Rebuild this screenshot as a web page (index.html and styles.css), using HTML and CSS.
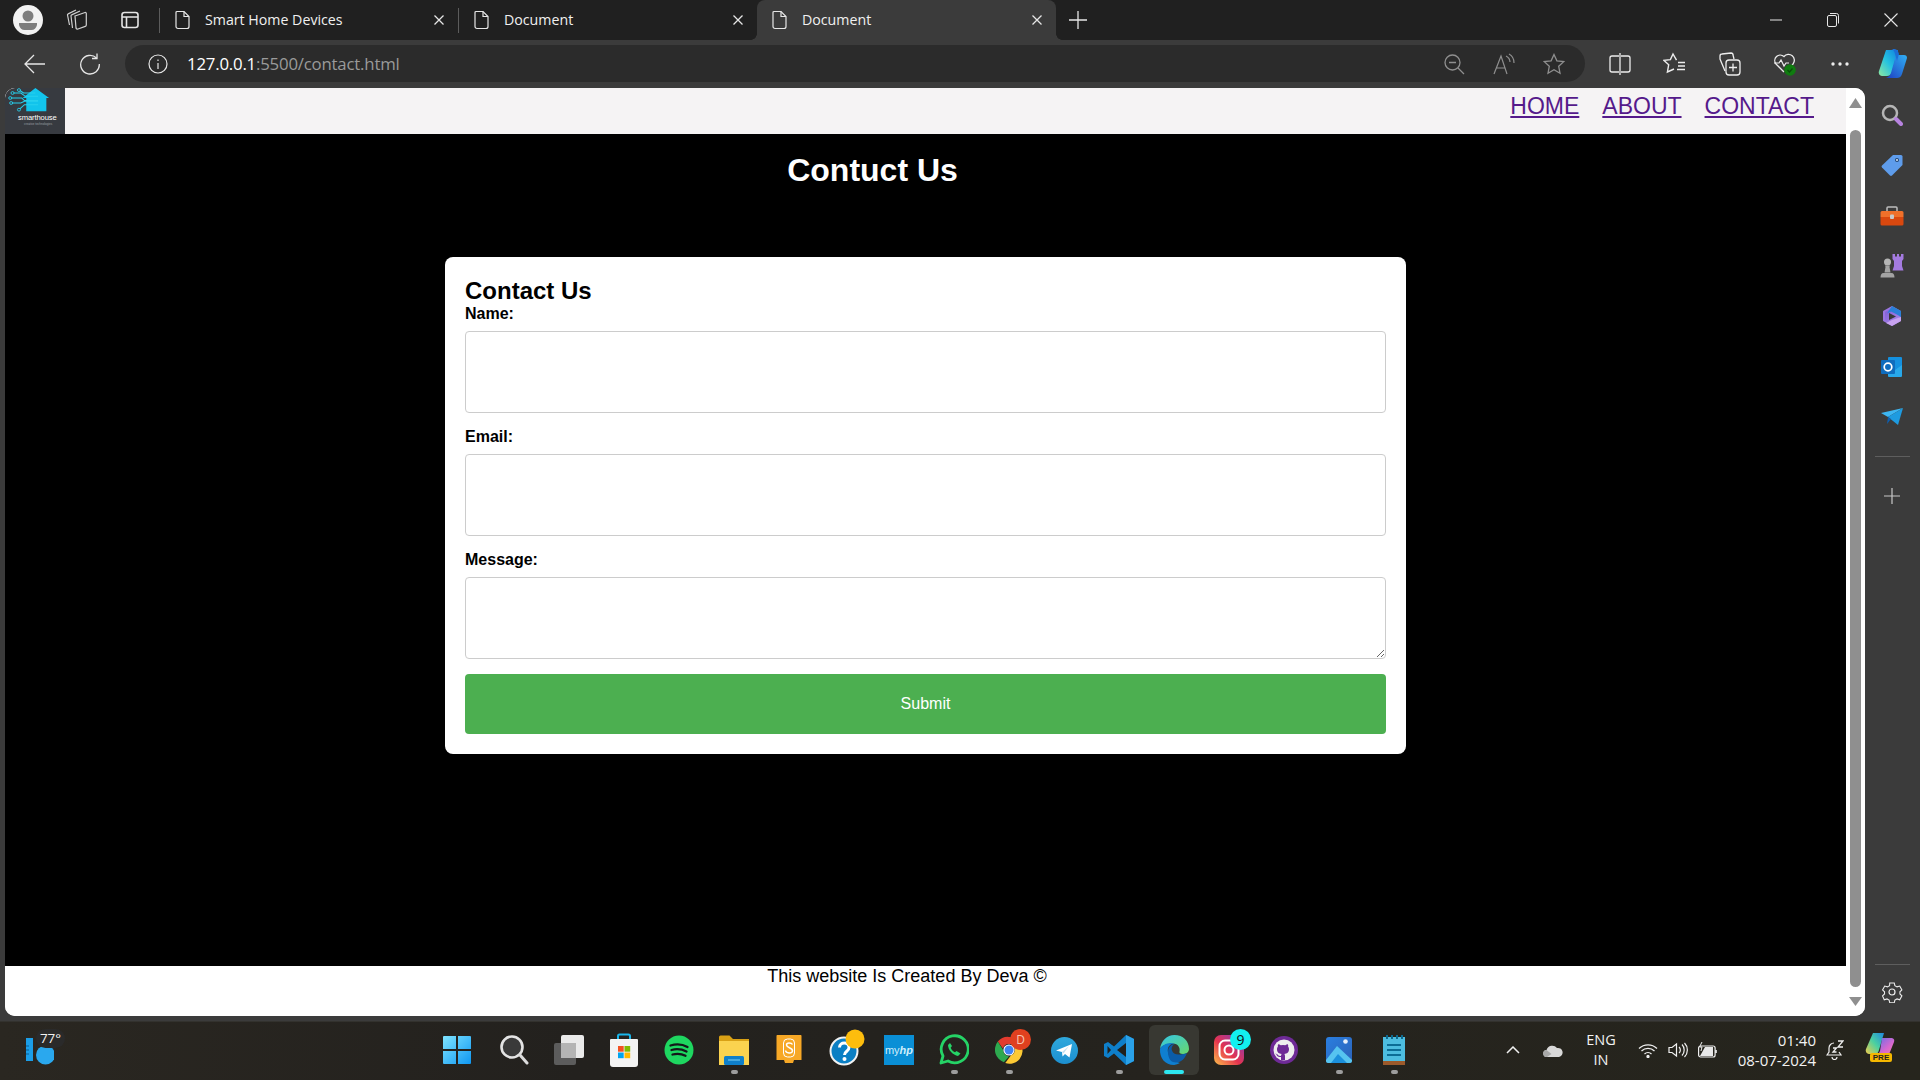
FILE: index.html
```html
<!DOCTYPE html>
<html lang="en">
<head>
<meta charset="utf-8">
<title>Document</title>
<link rel="stylesheet" href="styles.css">
</head>
<body>
<div class="tabstrip">
  <div class="cell profile"><svg width="30" height="30" viewBox="0 0 30 30"><circle cx="15" cy="15" r="15" fill="#f2f2f2"/><circle cx="15" cy="11" r="5.5" fill="#7d7d7d"/><path d="M6 18h18v2a6 7 0 0 1-6 5h-6a6 7 0 0 1-6-5z" fill="#7d7d7d"/></svg></div>
  <div class="cell workspaces"><svg width="24" height="24" viewBox="0 0 24 24" fill="none" stroke="#cfcfcf" stroke-width="1.2"><path d="M10 8l10-3.500a1 1 0 0 1 1.300 1V17a1.500 1.500 0 0 1-1 1.400L13 21a1.500 1.500 0 0 1-2-1z"/><path d="M7.500 20L6 8a1 1 0 0 1 .7-1.100L15 3"/><path d="M4.500 17L2.500 7a1 1 0 0 1 .7-1.100L11 2"/></svg></div>
  <div class="cell vtabs"><svg width="20" height="20" viewBox="0 0 20 20" fill="none" stroke="#e4e4e4" stroke-width="1.6"><rect x="2" y="2.500" width="16" height="15" rx="2.500"/><path d="M2 7h16M6.500 7v10" /></svg></div>
  <div class="tsep"></div>
  <div class="tab">
    <svg class="page-ico" width="18" height="20" viewBox="0 0 18 20" fill="none" stroke="#e6e6e6" stroke-width="1.200"><path d="M3 1.500h7l5 5v10a2 2 0 0 1-2 2H4a2 2 0 0 1-2-2V2.500a1 1 0 0 1 1-1z"/><path d="M10 1.500v5h5"/></svg>
    <span class="tab-title">Smart Home Devices</span>
    <svg class="tab-x" width="12" height="12" viewBox="0 0 12 12" stroke="#e6e6e6" stroke-width="1.300"><path d="M1.500 1.500l9 9M10.500 1.500l-9 9"/></svg>
  </div>
  <div class="tsep tsep-mid"></div>
  <div class="tab">
    <svg class="page-ico" width="18" height="20" viewBox="0 0 18 20" fill="none" stroke="#e6e6e6" stroke-width="1.200"><path d="M3 1.500h7l5 5v10a2 2 0 0 1-2 2H4a2 2 0 0 1-2-2V2.500a1 1 0 0 1 1-1z"/><path d="M10 1.500v5h5"/></svg>
    <span class="tab-title">Document</span>
    <svg class="tab-x" width="12" height="12" viewBox="0 0 12 12" stroke="#e6e6e6" stroke-width="1.300"><path d="M1.500 1.500l9 9M10.500 1.500l-9 9"/></svg>
  </div>
  <div class="tab active">
    <svg class="page-ico" width="18" height="20" viewBox="0 0 18 20" fill="none" stroke="#e6e6e6" stroke-width="1.200"><path d="M3 1.500h7l5 5v10a2 2 0 0 1-2 2H4a2 2 0 0 1-2-2V2.500a1 1 0 0 1 1-1z"/><path d="M10 1.500v5h5"/></svg>
    <span class="tab-title">Document</span>
    <svg class="tab-x" width="12" height="12" viewBox="0 0 12 12" stroke="#e6e6e6" stroke-width="1.300"><path d="M1.500 1.500l9 9M10.500 1.500l-9 9"/></svg>
  </div>
  <div class="cell newtab"><svg width="18" height="18" viewBox="0 0 18 18" stroke="#e6e6e6" stroke-width="1.300"><path d="M9 0v18M0 9h18"/></svg></div>
  <div class="winctl">
    <div class="wc wc-min"><svg width="12" height="2" viewBox="0 0 12 2" stroke="#e6e6e6"><path d="M0 1h12"/></svg></div>
    <div class="wc"><svg width="12" height="14" viewBox="0 0 12 14" fill="none" stroke="#e6e6e6"><rect x=".5" y="2.500" width="9" height="11" rx="1.500"/><path d="M3 .5h6.500a2 2 0 0 1 2 2v8"/></svg></div>
    <div class="wc"><svg width="14" height="14" viewBox="0 0 14 14" stroke="#e6e6e6" stroke-width="1.100"><path d="M.5.5l13 13M13.500.5l-13 13"/></svg></div>
  </div>
</div>

<div class="toolbar">
  <div class="cell back"><svg width="22" height="20" viewBox="0 0 22 20" fill="none" stroke="#e6e6e6" stroke-width="1.300"><path d="M1 10h20M10 1l-9 9 9 9"/></svg></div>
  <div class="cell reload"><svg width="22" height="22" viewBox="0 0 22 22" fill="none" stroke="#e6e6e6" stroke-width="1.300"><path d="M17.500 5a9.300 9.300 0 1 0 2.800 6"/><path d="M18 .5V5.500h-5"/></svg></div>
  <div class="omnibox">
    <svg class="info" width="22" height="22" viewBox="0 0 22 22" fill="none" stroke="#e6e6e6" stroke-width="1.200"><circle cx="11" cy="11" r="9"/><path d="M11 10v6M11 6.500v1.500"/></svg>
    <span class="url"><span class="url-host">127.0.0.1</span>:5500/contact.html</span>
    <div class="omni-actions">
      <svg width="22" height="22" viewBox="0 0 22 22" fill="none" stroke="#8f8f8f" stroke-width="1.300"><circle cx="9.500" cy="9.500" r="7.500"/><path d="M6 9.500h7M15 15l6 6"/></svg>
      <svg width="24" height="22" viewBox="0 0 24 22" fill="none" stroke="#8f8f8f" stroke-width="1.200"><path d="M2 21L9 3l6 18M4.500 15h9"/><path d="M14 3a7 7 0 0 1 4 6M17 1a10 10 0 0 1 5 9"/></svg>
      <svg width="22" height="22" viewBox="0 0 22 22" fill="none" stroke="#8f8f8f" stroke-width="1.300"><path d="M11 1.500l2.900 6.300 6.800.8-5 4.700 1.300 6.900-6-3.500-6 3.500 1.300-6.900-5-4.700 6.800-.8z"/></svg>
    </div>
  </div>
  <div class="tool-actions">
    <div class="tool"><svg width="22" height="22" viewBox="0 0 22 22" fill="none" stroke="#ededed" stroke-width="1.300"><path d="M10 3H3a2 2 0 0 0-2 2v12a2 2 0 0 0 2 2h7M12 3h7a2 2 0 0 1 2 2v12a2 2 0 0 1-2 2h-7M11 0v22"/></svg></div>
    <div class="tool"><svg width="24" height="24" viewBox="0 0 24 24" fill="none" stroke="#ededed" stroke-width="1.400"><path d="M13.500 8.200L10 2 7.400 7.600 1 8.400l4.700 4.300L4.400 20l6.600-3"/><path d="M15 10.500h7M15 14h7M14 17.500h8"/></svg></div>
    <div class="tool"><svg width="24" height="26" viewBox="0 0 24 26" fill="none" stroke="#ededed" stroke-width="1.300"><path d="M7 20L2 8V5a2 2 0 0 1 2-2l9-1a2 2 0 0 1 2 2l1 4"/><rect x="8" y="9" width="14" height="15" rx="3"/><path d="M15 12.500v8M11 16.500h8"/></svg></div>
    <div class="tool"><svg width="24" height="26" viewBox="0 0 24 26" fill="none"><path d="M11 21L3 13a5.500 5.500 0 0 1 8-7.500A5.500 5.500 0 0 1 20 13l-1 1" stroke="#ededed" stroke-width="1.300"/><path d="M1 12h5l2-3 3 6 2-3h3" stroke="#ededed" stroke-width="1.200"/><circle cx="17" cy="19" r="5.800" fill="#107c10"/><path d="M14.500 19l2 2 3-3.500" stroke="#0a4d0a" stroke-width="1.200"/></svg></div>
    <div class="tool"><svg width="18" height="4" viewBox="0 0 18 4" fill="#ededed"><circle cx="2" cy="2" r="1.700"/><circle cx="9" cy="2" r="1.700"/><circle cx="16" cy="2" r="1.700"/></svg></div>
    <div class="tool copilot"><svg width="32" height="32" viewBox="0 0 32 32"><defs><linearGradient id="cpa" x1="0" y1="1" x2="1" y2="0"><stop offset="0" stop-color="#8ee8a0"/><stop offset=".5" stop-color="#25c2e0"/><stop offset="1" stop-color="#1080e0"/></linearGradient><linearGradient id="cpb" x1="0" y1="1" x2="1" y2="0"><stop offset="0" stop-color="#1e3fc0"/><stop offset="1" stop-color="#30b0f5"/></linearGradient></defs><path d="M10 2h12l-6 22c-1 3-3 4-5 4H7c-3 0-5-2-4-5z" fill="url(#cpa)"/><path d="M20 7h8c2 0 3 1 3 3l-5 16c-1 3-3 4-5 4H10c3-1 4-3 5-5l5-18z" fill="url(#cpb)"/><path d="M18 1c2 0 4 1 5 5l-2 7-2-7c-.5-3-2-5-4-5z" fill="#1c6ed6"/></svg></div>
  </div>
</div>

<div class="workspace">
  <div class="webview">
    <div class="page">
      <nav class="nav">
        <div class="logo">
          <svg width="42" height="25" viewBox="0 0 46 30" preserveAspectRatio="none" fill="none"><path d="M16 12L30 0l15 12h-3v16H20V12z" fill="#12c4ec"/><path d="M6 6h8l5 4h14M3 12h12l3 3h15M4 18h10l4-2h15M13 25l5-5h15M13 3l4 3h13" stroke="#27d0ee" stroke-width="1.200"/><circle cx="5" cy="6" r="1.700" stroke="#27d0ee"/><circle cx="2.500" cy="12" r="1.700" stroke="#27d0ee"/><circle cx="3.500" cy="18" r="1.700" stroke="#27d0ee"/><circle cx="12" cy="26" r="1.700" stroke="#27d0ee"/><circle cx="12" cy="2.500" r="1.700" stroke="#27d0ee"/></svg>
          <span class="logo-name">smarthouse</span>
          <span class="logo-sub">creative technologies</span>
        </div>
        <div class="links">
          <a href="#home">HOME</a>
          <a href="#about">ABOUT</a>
          <a href="#contact">CONTACT</a>
        </div>
      </nav>
      <main class="main">
        <h1 class="title">Contuct Us</h1>
        <form class="card">
          <h2 class="card-title">Contact Us</h2>
          <label class="lbl" for="name">Name:</label>
          <input class="field" id="name" type="text">
          <label class="lbl" for="email">Email:</label>
          <input class="field" id="email" type="email">
          <label class="lbl" for="msg">Message:</label>
          <textarea class="field" id="msg"></textarea>
          <button class="submit" type="button">Submit</button>
        </form>
      </main>
      <footer class="foot">This website Is Created By Deva ©</footer>
    </div>
    <div class="scrollbar">
      <svg width="13" height="10" viewBox="0 0 13 10"><path d="M6.500 0L13 10H0z" fill="#8f8f8f"/></svg>
      <div class="thumb"></div>
      <svg width="13" height="9" viewBox="0 0 13 9"><path d="M0 0h13L6.500 9z" fill="#8f8f8f"/></svg>
    </div>
  </div>
  <aside class="sidebar">
    <div class="side"><svg width="22" height="22" viewBox="0 0 22 22" fill="none"><circle cx="9" cy="9" r="7" stroke="#b5b5b5" stroke-width="2.500"/><path d="M15 15l5 5" stroke="#b783e0" stroke-width="4" stroke-linecap="round"/></svg></div>
    <div class="side"><svg width="22" height="22" viewBox="0 0 22 22"><path d="M12 1h8a1.500 1.500 0 0 1 1.500 1.500V11L11 21.500a1.500 1.500 0 0 1-2 0L1 13.500a1.500 1.500 0 0 1 0-2z" fill="#5e9ceb"/><circle cx="16" cy="6" r="2" fill="#24456e"/><circle cx="16" cy="6" r="1" fill="#dbe9fb"/></svg></div>
    <div class="side"><svg width="24" height="20" viewBox="0 0 24 20"><path d="M7 5V2a1 1 0 0 1 1-1h8a1 1 0 0 1 1 1v3" fill="none" stroke="#bdbdbd" stroke-width="1.500"/><path d="M2 5h20a1.500 1.500 0 0 1 1.500 1.500V11H.5V6.500A1.500 1.500 0 0 1 2 5z" fill="#f0702a"/><path d="M.5 11h23v7a1.500 1.500 0 0 1-1.500 1.500H2A1.500 1.500 0 0 1 .5 18z" fill="#d9480f"/><rect x="10" y="8.500" width="4" height="4.500" rx="1" fill="#c9c9c9"/></svg></div>
    <div class="side"><svg width="24" height="24" viewBox="0 0 24 24"><path d="M12.500 0H15v2.500h2V0h2v2.500h2V0h2.500v5L22 7v5l1.500 4.500h-11L14 12V7l-1.500-2z" fill="#a47be0"/><circle cx="7.500" cy="8" r="3.500" fill="#b5b5b5"/><path d="M5 11.500h5L9.500 13l1 5.500h-6l1-5.500zM.5 23.500c0-2.500 1-4.500 3-4.500h8c2 0 3 2 3 4.500z" fill="#a3a3a3"/></svg></div>
    <div class="side"><svg width="22" height="22" viewBox="0 0 22 22"><defs><linearGradient id="m3a" x1="0" y1="0" x2="1" y2="1"><stop offset="0" stop-color="#7b5ad6"/><stop offset="1" stop-color="#b08be8"/></linearGradient></defs><path d="M11 2l8 4.500v9L11 20l-8-4.500v-9z" fill="url(#m3a)" stroke="#9a75e0" stroke-width="2" stroke-linejoin="round"/><path d="M11 1l9 5v6l-5-3-5-2.500-4 2z" fill="#2a80d8"/><path d="M20 12v4l-9 5-6-3 6-3z" fill="#c8a3f0"/><path d="M8 8l7 3.500-7 3.500z" fill="#3a3a3a"/></svg></div>
    <div class="side"><svg width="22" height="22" viewBox="0 0 22 22"><rect x="7" y="1" width="14" height="19" rx="1" fill="#1490df"/><path d="M7 9l7 5 7-5v11a1 1 0 0 1-1 1H8a1 1 0 0 1-1-1z" fill="#28a8ea"/><rect x="0" y="4" width="14" height="14" rx="1" fill="#0f6cbd"/><circle cx="7" cy="11" r="3.800" fill="none" stroke="#fff" stroke-width="1.700"/></svg></div>
    <div class="side"><svg width="22" height="18" viewBox="0 0 22 18"><path d="M0 5l22-5-15 9z" fill="#3db6f2"/><path d="M22 0L7 9l10 8z" fill="#1e9be0"/><path d="M7 9l3 2-4 5z" fill="#0d5fb0"/></svg></div>
    <div class="side-sep"></div>
    <div class="side side-plus"><svg width="16" height="16" viewBox="0 0 16 16" stroke="#c8c8c8" stroke-width="1.200"><path d="M8 0v16M0 8h16"/></svg></div>
    <div class="side-sep side-sep-low"></div>
    <div class="side side-gear"><svg width="22" height="22" viewBox="0 0 22 22" fill="none" stroke="#ededed" stroke-width="1.200"><circle cx="11" cy="11" r="3"/><path d="M8.500 1h5l.7 3 2.400 1.300 3-.9 2.400 4.300-2.200 2.100v2.400l2.200 2.100-2.400 4.300-3-.9-2.400 1.300-.7 3h-5l-.7-3-2.400-1.300-3 .9L.5 15.300l2.200-2.100v-2.400L.5 8.700l2.400-4.300 3 .9 2.400-1.300z" transform="translate(1.100 1.100) scale(.9)"/></svg></div>
  </aside>
</div>

<footer class="taskbar">
  <div class="weather">
    <svg class="w-ico" width="28" height="27" viewBox="0 0 28 27"><rect x="0" y="0" width="7" height="23" fill="#1b9ee8"/><path d="M0 8h3M0 12h3M0 16h3" stroke="#0b5f96"/><circle cx="19.500" cy="17" r="9.500" fill="#2aa8ee"/></svg>
    <span class="w-temp">77°</span>
  </div>
  <div class="apps">
    <div class="app app-start"><svg width="30" height="30" viewBox="0 0 30 30"><defs><linearGradient id="gs" x1="0" y1="0" x2="1" y2="1"><stop offset="0" stop-color="#7fe4ff"/><stop offset="1" stop-color="#0f97f2"/></linearGradient></defs><path d="M1 2a1 1 0 0 1 1-1h12v13H1zM16 1h12a1 1 0 0 1 1 1v12H16zM1 16h13v13H2a1 1 0 0 1-1-1zM16 16h13v12a1 1 0 0 1-1 1H16z" fill="url(#gs)"/></svg></div>
    <div class="app"><svg width="30" height="32" viewBox="0 0 30 32" fill="none"><circle cx="13" cy="13" r="10.500" fill="#3a3a3a" stroke="#e4e4e4" stroke-width="2.600"/><path d="M21 21l7 8" stroke="#dcdcdc" stroke-width="3" stroke-linecap="round"/></svg></div>
    <div class="app"><svg width="30" height="30" viewBox="0 0 30 30"><rect x="0" y="8" width="22" height="22" rx="2" fill="#5c5c5c"/><rect x="7" y="0" width="23" height="23" rx="2" fill="#eaeaea"/><rect x="7" y="8" width="15" height="15" fill="#b4b4b4"/></svg></div>
    <div class="app"><svg width="30" height="34" viewBox="0 0 30 34"><path d="M9 8V3a1.500 1.500 0 0 1 1.500-1.500h9A1.500 1.500 0 0 1 21 3v5" fill="none" stroke="#19b5ea" stroke-width="2"/><path d="M2 6h26a1 1 0 0 1 1 1v24a3 3 0 0 1-3 3H4a3 3 0 0 1-3-3V7a1 1 0 0 1 1-1z" fill="#f3f3f3"/><rect x="9" y="13" width="5.700" height="5.700" fill="#f25022"/><rect x="15.500" y="13" width="5.700" height="5.700" fill="#7fba00"/><rect x="9" y="19.500" width="5.700" height="5.700" fill="#00a4ef"/><rect x="15.500" y="19.500" width="5.700" height="5.700" fill="#ffb900"/></svg></div>
    <div class="app"><svg width="30" height="30" viewBox="0 0 30 30" fill="none"><circle cx="15" cy="15" r="14.500" fill="#1ed760"/><path d="M6.500 10.500c6-1.800 12-1.300 17 1.500M7.500 15c5-1.400 10-1 15 1.500M8.500 19.500c4-1 9-.8 13 1.300" stroke="#14171a" stroke-width="2.300" stroke-linecap="round"/></svg></div>
    <div class="app"><svg width="30" height="30" viewBox="0 0 30 30"><path d="M0 2a1.500 1.500 0 0 1 1.500-1.500h9L14 4h16v4H0z" fill="#d9a115"/><path d="M0 6h30v24H0z" fill="#fbd34f"/><rect x="5" y="21" width="20" height="9" rx="1.500" fill="#0f7fc9"/><path d="M9 25h12" stroke="#7fd3f5"/></svg><span class="dot"></span></div>
    <div class="app"><svg width="26" height="32" viewBox="0 0 26 32" fill="none"><path d="M1 1h24a1 1 0 0 1 .5 1v24H18l-1 3H9l-1-3H.5V2A1 1 0 0 1 1 1z" fill="#f7a826"/><path d="M16.500 10.500c-1-2-6-2.500-6 .5s6.500 2.500 6 6c-.5 3-6.500 2.500-7-.5" stroke="#fff" stroke-width="1.500"/><rect x="7.500" y="5" width="11" height="18" rx="4" stroke="#fff" stroke-width="1"/></svg></div>
    <div class="app"><svg class="over" width="38" height="40" viewBox="0 0 38 40" fill="none"><circle cx="15" cy="25" r="13.500" fill="#0b7fc4" stroke="#f2f2f2" stroke-width="2"/><path d="M10.500 21.500c0-6 9.500-6 9.500 0 0 4-4.500 3.500-4.500 7.500" stroke="#fff" stroke-width="3"/><circle cx="15.500" cy="33" r="2" fill="#fff"/><circle cx="26" cy="13" r="9.500" fill="#fdbd0d"/></svg></div>
    <div class="app"><div class="myhp">my<i>hp</i></div></div>
    <div class="app"><svg width="30" height="32" viewBox="0 0 30 32" fill="none"><path d="M2 29l2-7A13.500 13.500 0 1 1 9 27z" stroke="#25d366" stroke-width="2.800" stroke-linejoin="round"/><path d="M11 9l-2 2c0 5 5 10 10 11l2.500-2.500-4-2.500-1.500 1.300c-2-1-3.500-2.500-4.300-4.500L13 12z" fill="#25d366"/></svg><span class="dot"></span></div>
    <div class="app"><svg width="28" height="30" viewBox="0 0 30 30"><path d="M15 1a14 14 0 0 1 12.500 7.500H15a6.500 6.500 0 0 0-6.500 5L3 6A14 14 0 0 1 15 1z" fill="#e33b2e"/><path d="M3 6l6 9.500a6.500 6.500 0 0 0 6 6.500L9.500 28A14 14 0 0 1 3 6z" fill="#2da94f"/><path d="M27.500 8.500A14 14 0 0 1 11 29l6-8a6.500 6.500 0 0 0 3-10z" fill="#fcc934"/><circle cx="15" cy="15" r="6" fill="#fff"/><circle cx="15" cy="15" r="4.800" fill="#3f83f1"/></svg><span class="badge badge-red">D</span><span class="dot"></span></div>
    <div class="app"><svg width="27" height="27" viewBox="0 0 27 27"><defs><linearGradient id="tg" x1="0" y1="0" x2="0" y2="1"><stop offset="0" stop-color="#2fa8dc"/><stop offset="1" stop-color="#1c8fd0"/></linearGradient></defs><circle cx="13.500" cy="13.500" r="13.500" fill="url(#tg)"/><path d="M5 13.500L21 7l-2.500 13.500-4.500-3.500-2.500 2.500-.5-4.500z" fill="#fff"/><path d="M11 15l7-6-5.500 7.500z" fill="#c4dff0"/></svg></div>
    <div class="app"><svg width="30" height="30" viewBox="0 0 30 30"><path d="M22 0l8 4v22l-8 4-12-11.500L4 23l-4-2V9l4-2 6 4.500z" fill="#0e7fca"/><path d="M22 0l8 4v22l-8 4z" fill="#2aa1e8"/><path d="M22 8L13 15l9 7z" fill="#21201c"/><path d="M3.500 11L7 15l-3.500 4z" fill="#21201c"/></svg><span class="dot"></span></div>
    <div class="app app-on"><svg width="30" height="30" viewBox="0 0 30 30"><defs><linearGradient id="eg" x1="0" y1="0" x2="1" y2="1"><stop offset="0" stop-color="#33c6e8"/><stop offset="1" stop-color="#69d86a"/></linearGradient></defs><path d="M1 14C2 6 8 0 15.500 0 24 0 30 6 30 14c0 3-3 5-6 5-3 0-4-1-3.500-2.500C21.500 13 19 8.500 14 8.500 7 8.500 2 11 1 14z" fill="url(#eg)"/><path d="M1 14c1-3 6-6 11-6 1.500 0 2.500.3 3 .5-5 .5-7 4.500-6 9 1 5 6 9 12 10.500A15 15 0 0 1 15 30C6 30 .5 23 1 14z" fill="#0f7fd0"/><path d="M9 17c0-4.500 3-8 7-8-2.500 1-4 3.500-3 6.500 1 3.500 5 5 11 3.500 2 0 4-1 4-1-2 6-7 11-14 9-3-1-5-5-5-10z" fill="#0b5ca8"/></svg><span class="active-pill"></span></div>
    <div class="app"><svg width="30" height="30" viewBox="0 0 30 30" fill="none"><defs><linearGradient id="ig" x1="0" y1="1" x2="1" y2="0"><stop offset="0" stop-color="#fdc04a"/><stop offset=".45" stop-color="#e5334f"/><stop offset="1" stop-color="#7b3bc9"/></linearGradient></defs><rect width="30" height="30" rx="7" fill="url(#ig)"/><rect x="5.500" y="5.500" width="19" height="19" rx="5.500" stroke="#fff" stroke-width="2"/><circle cx="15" cy="15" r="4.500" stroke="#fff" stroke-width="2"/></svg><span class="badge badge-cyan">9</span></div>
    <div class="app"><svg width="28" height="28" viewBox="0 0 28 28"><circle cx="14" cy="14" r="14" fill="#6e2a96"/><circle cx="14" cy="14" r="10.500" fill="#eee"/><path d="M11 24v-3c-3 .5-4-1-4.500-2.500L5 17.500l2 .5 1.500 1.500c.8.500 1.800.5 2.500.2 0-.7.300-1.200.7-1.600-2.700-.4-4.700-1.600-4.700-5 0-1 .3-1.800.9-2.500-.2-.6-.2-1.500.2-2.400 1 0 1.800.4 2.600 1a9 9 0 0 1 4.600 0c.8-.6 1.600-1 2.600-1 .4.900.4 1.800.2 2.400.6.7.9 1.500.9 2.500 0 3.400-2 4.600-4.700 5 .5.400.7 1.100.7 1.900V24z" fill="#6e2a96"/></svg></div>
    <div class="app"><svg width="26" height="26" viewBox="0 0 26 26"><defs><linearGradient id="pg" x1="0" y1="0" x2="1" y2="1"><stop offset="0" stop-color="#2a7fe0"/><stop offset="1" stop-color="#2c62b8"/></linearGradient></defs><rect width="26" height="26" rx="3" fill="url(#pg)"/><circle cx="19.500" cy="4.500" r="2.300" fill="#e8f0fa"/><path d="M0 23l11-14 15 14v1a2 2 0 0 1-2 2H2a2 2 0 0 1-2-2z" fill="#56c4f0"/><path d="M5 26l7-9 9 9z" fill="#1b90dc"/></svg><span class="dot"></span></div>
    <div class="app"><svg width="24" height="30" viewBox="0 0 24 30"><rect x="1" y="2" width="22" height="26" fill="#4dbde0"/><rect x="1" y="26" width="22" height="4" fill="#9c5a2b"/><path d="M5 0v4M10 0v4M15 0v4M20 0v4" stroke="#0d6a8f" stroke-width="2"/><path d="M5 10h14M5 15h14M5 20h14" stroke="#0c6d96" stroke-width="1.800"/></svg><span class="dot"></span></div>
  </div>
  <div class="tray">
    <div class="t-chev"><svg width="14" height="8" viewBox="0 0 14 8" fill="none" stroke="#f0f0f0" stroke-width="1.500"><path d="M1 7l6-6 6 6"/></svg></div>
    <div class="t-cloud"><svg width="20" height="13" viewBox="0 0 20 13"><path d="M4 13a3.500 3.500 0 0 1-.5-7A6 6 0 0 1 14 4a4.500 4.500 0 0 1 2 9z" fill="#d8d8d8"/><path d="M4 13a3.500 3.500 0 0 1-.5-7l5 4z" fill="#a8a8a8"/></svg></div>
    <div class="t-lang"><span>ENG</span><span>IN</span></div>
    <div class="t-wifi"><svg width="20" height="15" viewBox="0 0 20 15" fill="none" stroke="#f0f0f0" stroke-width="1.300"><path d="M1 5.500a13 13 0 0 1 18 0M3.500 8a9.500 9.500 0 0 1 13 0M6.500 11a5.200 5.200 0 0 1 7 0"/><circle cx="10" cy="13.500" r="1" fill="#f0f0f0"/></svg></div>
    <div class="t-vol"><svg width="20" height="16" viewBox="0 0 20 16" fill="none" stroke="#f0f0f0" stroke-width="1.200"><path d="M1 5.500v5h3l4.500 3.500V2L4 5.500z"/><path d="M11 5a4 4 0 0 1 0 6M14 2.500a8 8 0 0 1 0 11M16.500 1a10 10 0 0 1 0 14"/></svg></div>
    <div class="t-batt"><svg width="20" height="16" viewBox="0 0 20 16" fill="none"><rect x=".6" y="4" width="16.500" height="11" rx="2" stroke="#f0f0f0" stroke-width="1.200"/><path d="M2 14l5-9h8v9z" fill="#e8e8e8"/><path d="M18 8v3" stroke="#f0f0f0" stroke-width="1.600"/><path d="M4 0L1.500 5H4L3 9" stroke="#f0f0f0" stroke-width="1"/></svg></div>
    <div class="t-clock"><span>01:40</span><span>08-07-2024</span></div>
    <div class="t-bell"><svg width="18" height="20" viewBox="0 0 18 20" fill="none" stroke="#f0f0f0" stroke-width="1.200"><path d="M8 3a5 5 0 0 0-5 5v4l-2 3h14l-2-3"/><path d="M6 17a2.500 2.500 0 0 0 5 0"/><path d="M7 8h3.500L7 12h3.500M12 1h5l-5 6h5" stroke-width="1.300"/></svg></div>
    <div class="t-copilot">
      <svg width="30" height="24" viewBox="0 0 30 24"><defs><linearGradient id="tca" x1="0" y1="1" x2="1" y2="0"><stop offset="0" stop-color="#f2cc4a"/><stop offset=".5" stop-color="#4bd1a0"/><stop offset="1" stop-color="#1e88e0"/></linearGradient><linearGradient id="tcb" x1="0" y1="0" x2="1" y2="1"><stop offset="0" stop-color="#5a6fe8"/><stop offset=".6" stop-color="#d868d0"/><stop offset="1" stop-color="#f08aa0"/></linearGradient></defs><path d="M8 0h11l-5 17c-1 3-2 4-4 4H5c-3 0-5-2-4-5z" fill="url(#tca)"/><path d="M17 5h9c2 0 4 1 3 4l-4 10c-1 3-3 4-5 4H10c3-1 4-3 5-5l2-13z" fill="url(#tcb)"/></svg>
      <span class="pre">PRE</span>
    </div>
  </div>
</footer>
</body>
</html>
```

FILE: styles.css
```css
* { box-sizing: border-box; }
html, body { margin: 0; padding: 0; }
body {
  width: 1920px;
  height: 1080px;
  overflow: hidden;
  display: flex;
  flex-direction: column;
  background: #3b3b3b;
  font-family: "Liberation Sans", Arial, sans-serif;
  color: #000;
}
.cell { display: flex; align-items: center; justify-content: center; flex: none; }

/* tab strip */
.tabstrip { height: 40px; flex: none; display: flex; align-items: center; background: #202020; padding-left: 8px; }
.profile, .workspaces, .vtabs { width: 40px; height: 40px; }
.workspaces { margin-left: 9px; }
.vtabs { margin-left: 13px; }
.tsep { width: 1px; height: 25px; background: #5c5c5c; margin-left: 9px; flex: none; }
.tsep-mid { margin-left: 0; }
.tab { position: relative; width: 298px; height: 40px; flex: none; display: flex; align-items: center; padding: 0 13px 0 14px; }
.tab.active { width: 299px; background: #3b3b3b; border-radius: 8px 8px 0 0; }
.tab.active::before, .tab.active::after {
  content: ""; position: absolute; bottom: 0; width: 6px; height: 6px;
  background: radial-gradient(circle at 0 0, transparent 5.500px, #3b3b3b 6px);
}
.tab.active::before { left: -6px; }
.tab.active::after { right: -6px; transform: scaleX(-1); }
.page-ico { flex: none; }
.tab-title { margin: 0 0 2px 13px; font: 14.200px "Open Sans", "Noto Sans", sans-serif; color: #f0f0f0; white-space: nowrap; }
.tab-x { margin-left: auto; flex: none; }
.newtab { width: 24px; height: 40px; margin-left: 10px; }
.winctl { margin-left: auto; display: flex; }
.wc { width: 58px; height: 40px; display: flex; align-items: center; justify-content: center; }
.wc-min { padding-left: 1px; }

/* toolbar */
.toolbar { height: 48px; flex: none; display: flex; align-items: center; background: #3b3b3b; padding: 0 0 1px 15px; }
.back, .reload { width: 40px; height: 40px; }
.reload { margin-left: 15px; }
.omnibox { width: 1460px; height: 37px; margin-left: 15px; flex: none; display: flex; align-items: center; background: #2b2b2b; border-radius: 19px; padding: 0 6px 0 22px; }
.info { flex: none; }
.url { margin-left: 18px; font: 16.800px "Open Sans", "Noto Sans", sans-serif; color: #9a9a9a; letter-spacing: -.2px; white-space: nowrap; }
.url-host { color: #fff; }
.omni-actions { margin-left: auto; display: flex; align-items: center; gap: 27px; padding-right: 14px; }
.tool-actions { display: flex; align-items: center; gap: 11px; margin-left: 13px; }
.tool { width: 44px; height: 40px; display: flex; align-items: center; justify-content: center; }
.copilot { width: 32px; margin-left: 3px; }

/* browser content */
.workspace { height: 933px; flex: none; display: flex; padding: 0 0 5px 5px; }
.webview { width: 1860px; height: 928px; flex: none; display: flex; border-radius: 10px; overflow: hidden; background: #fff; }
.page { width: 1841px; flex: none; display: flex; flex-direction: column; }
.nav { height: 46px; flex: none; display: flex; background: #f5f3f4; }
.logo { width: 60px; height: 46px; flex: none; background: #373a40; display: flex; flex-direction: column; align-items: flex-start; color: #fff; }
.logo svg { flex: none; margin-left: 3px; }
.logo-name { font-size: 7.600px; line-height: 8px; margin: 1px 0 0 13px; letter-spacing: -.1px; }
.logo-sub { font-size: 3px; line-height: 4px; margin-left: 19px; color: #9aa0a6; }
.links { margin-left: auto; display: flex; gap: 23px; padding: 5px 32px 0 0; font-size: 23px; line-height: 26px; }
.links a { color: #551a8b; }
.main { height: 832px; flex: none; background: #000; display: flex; flex-direction: column; }
.title { margin: 0; padding: 18px 106px 0 0; height: 55px; font-size: 32px; line-height: 37px; font-weight: 700; color: #fff; text-align: center; }
.card { width: 961px; margin: 68px auto 0 440px; padding: 20px; background: #fff; border-radius: 8px; display: flex; flex-direction: column; }
.card-title { margin: 0; font-size: 24px; line-height: 28px; font-weight: 700; }
.lbl { display: block; margin-bottom: 8px; font-size: 16px; line-height: 18px; font-weight: 700; }
.field { display: block; width: 100%; height: 82px; margin: 0 0 15px; border: 1px solid #ccc; border-radius: 4px; background: #fff; font: 16px "Liberation Sans", sans-serif; padding: 10px; }
.submit { height: 60px; border: 0; border-radius: 4px; background: #4caf50; color: #fff; font: 16px "Liberation Sans", sans-serif; }
.foot { height: 50px; flex: none; background: #fff; padding-right: 37px; text-align: center; font-size: 18px; line-height: 20px; }
.scrollbar { width: 19px; flex: none; display: flex; flex-direction: column; align-items: center; padding: 10px 0; background: #fff; }
.scrollbar svg { flex: none; }
.thumb { width: 11px; flex: 1; margin: 22px 0 10px; background: #8f8f8f; border-radius: 6px; }

/* right sidebar */
.sidebar { width: 55px; flex: none; height: 928px; display: flex; flex-direction: column; align-items: center; padding: 2px 1px 0 0; }
.side { width: 54px; height: 50.300px; flex: none; display: flex; align-items: center; justify-content: center; }
.side-sep { width: 35px; height: 1px; flex: none; background: #5e5e5e; margin-top: 14px; }
.side-plus { margin-top: 14px; }
.side-sep-low { margin-top: auto; }
.side-gear { margin: 2px 0 -1px; }

/* taskbar */
.taskbar { height: 59px; flex: none; display: flex; align-items: center; background: linear-gradient(90deg, #2a2721 0%, #23211e 30%, #25231e 60%, #26251d 100%); border-top: 1px solid #33322e; }
.weather { position: relative; width: 431.500px; height: 58px; flex: none; }
.w-ico { position: absolute; left: 26px; top: 16px; }
.w-temp { position: absolute; left: 36px; top: 7px; width: 29px; height: 19px; border-radius: 10px; background: #2a2a2a; color: #f2f2f2; font: 13.500px/19px "Open Sans", sans-serif; text-align: center; }
.apps { display: flex; flex: none; }
.app { position: relative; width: 55px; height: 58px; padding-bottom: 2px; flex: none; display: flex; align-items: center; justify-content: center; }
.app-on::before { content: ""; position: absolute; left: 2.500px; top: 3px; width: 50px; height: 50px; border-radius: 6px; background: #383832; }
.app svg { position: relative; }
.app-start svg { left: -2px; }
.app svg.over { top: -4px; left: 4px; }
.dot { position: absolute; left: 24px; top: 48px; width: 7px; height: 4px; border-radius: 2px; background: #9d9d9d; }
.active-pill { position: absolute; left: 17.500px; top: 48px; width: 20px; height: 4px; border-radius: 2px; background: #2de6f0; }
.badge { position: absolute; left: 28.500px; top: 7px; width: 21px; height: 21px; border-radius: 50%; text-align: center; font: 12px/21px "Open Sans", sans-serif; }
.badge-red { background: #e0401f; color: #f6c7b5; }
.badge-cyan { background: #12f0f0; color: #111; font-size: 14px; }
.myhp { width: 30px; height: 30px; background: #0a8fd6; color: #cfeefb; font: 11px/30px "Liberation Sans", sans-serif; text-align: center; }
.myhp i { font-weight: 700; }

.tray { margin-left: auto; padding: 0 24px 2px 0; display: flex; align-items: center; color: #f2f2f2; font: 14.500px "Open Sans", sans-serif; height: 58px; }
.tray > div { flex: none; display: flex; align-items: center; justify-content: center; }
.t-chev { width: 20px; margin-right: 20px; }
.t-cloud { width: 20px; margin-right: 18px; }
.tray > .t-lang { width: 40px; margin-right: 15px; flex-direction: column; line-height: 20px; }
.t-wifi { width: 24px; margin-right: 6px; }
.t-vol { width: 24px; margin-right: 6px; }
.t-batt { width: 24px; margin-right: 6px; }
.tray > .t-clock { width: 90px; margin-right: 7px; flex-direction: column; align-items: flex-end; line-height: 20px; font-size: 15px; white-space: nowrap; }
.t-bell { width: 24px; margin-right: 17px; }
.tray > .t-copilot { width: 32px; position: relative; height: 34px; align-items: flex-start; }
.pre { position: absolute; left: 6px; top: 20px; width: 22px; height: 9px; border-radius: 2px; background: #f5b800; color: #222; font: 700 8px/9px "Liberation Sans", sans-serif; text-align: center; }
```
